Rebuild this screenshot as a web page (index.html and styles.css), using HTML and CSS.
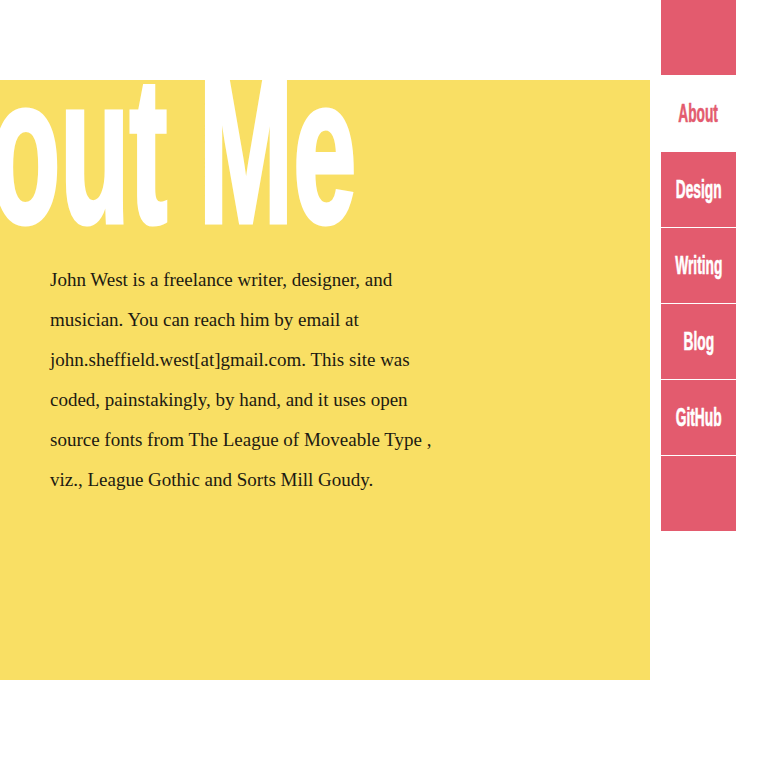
FILE: index.html
```html
<!DOCTYPE html>
<html lang="en">
<head>
<meta charset="utf-8">
<title>About Me — John West</title>
<link rel="stylesheet" href="styles.css">
</head>
<body>
<div class="page">
  <main class="panel">
    <h1 class="title"><span class="title-text">About Me</span></h1>
    <p class="bio">John West is a freelance writer, designer, and musician. You can reach him by email at john.sheffield.west[at]gmail.com. This site was coded, painstakingly, by hand, and it uses open source fonts from The League of Moveable Type , viz., League Gothic and Sorts Mill Goudy.</p>
  </main>
  <nav class="nav">
    <div class="nav-cap"></div>
    <a class="nav-item current" href="#"><span class="nav-label">About</span></a>
    <a class="nav-item" href="#"><span class="nav-label">Design</span></a>
    <a class="nav-item" href="#"><span class="nav-label">Writing</span></a>
    <a class="nav-item" href="#"><span class="nav-label">Blog</span></a>
    <a class="nav-item" href="#"><span class="nav-label">GitHub</span></a>
    <div class="nav-item empty"></div>
  </nav>
</div>
</body>
</html>
```

FILE: styles.css
```css
html, body {
  margin: 0;
  padding: 0;
  background: #ffffff;
}

body {
  overflow: hidden;
}

.page {
  display: flex;
  align-items: flex-start;
  gap: 11px;
}

.panel {
  width: 650px;
  height: 600px;
  margin-top: 80px;
  background: #f9df64;
  flex: none;
}

.title {
  margin: -34px 0 0;
  height: 208px;
  width: 358px;
  display: flex;
  justify-content: flex-end;
  font-family: "Liberation Sans", Arial, sans-serif;
  font-weight: bold;
  font-size: 208px;
  line-height: 1;
  color: #ffffff;
  white-space: nowrap;
}

.title-text {
  display: inline-block;
  flex: none;
  padding-right: 4px;
  -webkit-text-stroke: 5px #ffffff;
  transform: scaleX(0.545);
  transform-origin: right center;
}

.bio {
  margin: 6px 0 0;
  padding-left: 50px;
  width: 395px;
  font-family: "Liberation Serif", "Times New Roman", serif;
  font-size: 19px;
  line-height: 40px;
  color: #1c1a12;
}

.nav {
  width: 75px;
  flex: none;
  display: flex;
  flex-direction: column;
}

.nav-cap {
  height: 75px;
  border-bottom: 1px solid #ffffff;
  background: #e35b6e;
}

.nav-item {
  height: 75px;
  border-bottom: 1px solid #ffffff;
  background: #e35b6e;
  display: flex;
  align-items: center;
  justify-content: center;
  text-decoration: none;
  color: #ffffff;
  font-family: "Liberation Sans", Arial, sans-serif;
  font-weight: bold;
  font-size: 25px;
  line-height: 1;
  white-space: nowrap;
}

.nav-item.current {
  background: #ffffff;
  color: #e35b6e;
}

.nav-item.empty {
  border-bottom: none;
}

.nav-label {
  display: inline-block;
  -webkit-text-stroke: 0.6px currentColor;
  transform: scaleX(0.55);
}
```
